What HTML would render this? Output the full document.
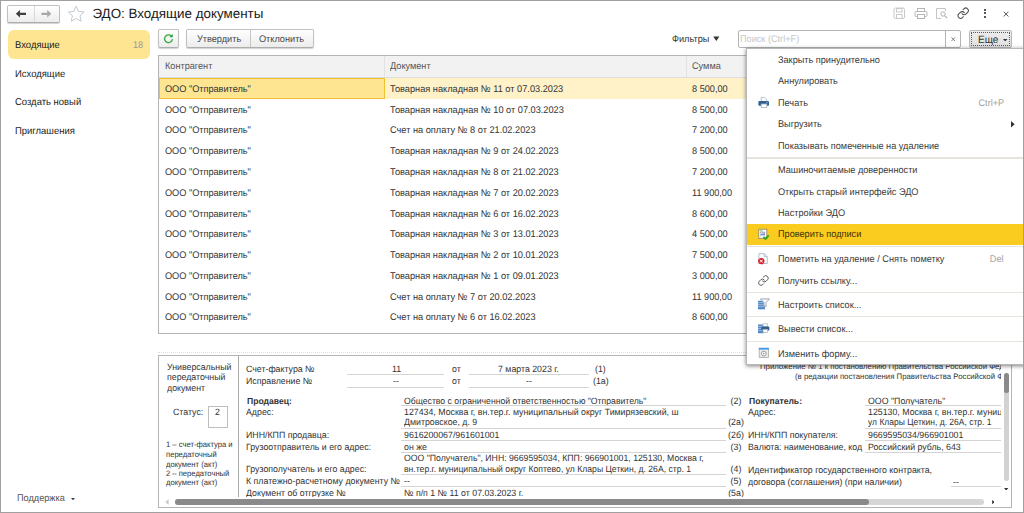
<!DOCTYPE html>
<html lang="ru"><head><meta charset="utf-8"><title>ЭДО: Входящие документы</title>
<style>
html,body{margin:0;padding:0}
body{width:1024px;height:513px;overflow:hidden;background:#fff;font-family:"Liberation Sans",sans-serif;font-size:9.700px;color:#333;position:relative;text-rendering:geometricPrecision}
div,span,i{box-sizing:border-box}
.a{position:absolute}
.t{position:absolute;white-space:nowrap;line-height:12px;height:12px;transform:scaleX(.945);transform-origin:0 0}
.frame{position:absolute;left:0;top:0;width:1024px;height:513px;border:1px solid #a0a0a0;pointer-events:none;z-index:50}
/* header */
.nav{left:7px;top:5px;width:53px;height:18px;border:1px solid #c0c0c0;border-bottom-color:#adadad;border-radius:2px;background:linear-gradient(#fff,#ececec);box-shadow:0 1px 1px rgba(0,0,0,.18)}
.nav i{position:absolute;left:26px;top:0;width:1px;height:16px;background:#d9d9d9}
.title{left:92.400px;top:4px;font-size:13.400px;transform:none;line-height:20px;height:20px;color:#1a1a1a}
/* sidebar */
.sel{left:8px;top:30px;width:142px;height:28.5px;background:#fde591;border-radius:6px}
.side{left:15px;font-size:9.900px;color:#222;transform:scaleX(.958)}
/* toolbar */
.btn{border:1px solid #c0c0c0;border-bottom-color:#adadad;border-radius:2px;background:linear-gradient(#fff,#ececec);box-shadow:0 1px 1px rgba(0,0,0,.18);height:18.500px;top:29px}
.btn .t{top:4px;color:#484848;font-size:9.700px}
/* table */
.tbl{left:158px;top:55px;width:860px;height:278.5px;border:1px solid #b4b4b4;background:#fff}
.th{left:159px;top:56px;width:858px;height:22px;background:#f2f2f2;border-bottom:1px solid #dcdcdc}
.th span{position:absolute;top:4.900px;line-height:12px;color:#555;white-space:nowrap;transform:scaleX(.945);transform-origin:0 0}
.r{position:absolute;left:159px;width:858px;height:20.83px}
.r span{position:absolute;top:6.200px;line-height:12px;white-space:nowrap;color:#333;transform:scaleX(.945);transform-origin:0 0}
.c1{left:5.500px}.c2{left:231px}.c3{left:533px}
.r .c2{transform:scaleX(.951)}
/* menu */
.menu{left:746px;top:48px;width:290px;height:316.5px;background:#fff;border:1px solid #b8b8b8;box-shadow:0 1px 4px rgba(0,0,0,.5);z-index:20}
.mi{position:absolute;left:30.600px;white-space:nowrap;line-height:12px;color:#3a3a3a;font-size:9.700px;transform:scaleX(.945);transform-origin:0 0}
.ms{position:absolute;left:0;width:290px;height:1.400px;background:#e6e4dc}
.sc{position:absolute;white-space:nowrap;line-height:12px;color:#a3a3a3;font-size:9.700px;transform:scaleX(.945);transform-origin:100% 0}
/* doc */
.doc{left:158px;top:355px;width:854px;height:153px;border:1px solid #b4b4b4;background:#fff;overflow:hidden}
.d{position:absolute;white-space:nowrap;line-height:11px;height:11px;font-size:9.100px;color:#333;transform:scaleX(.967);transform-origin:0 0}
.dc{transform-origin:50% 0}
.u{position:absolute;height:1px;background:#d4d4d4}
.s{font-size:7.900px}
.d b{font-weight:bold;font-size:8.900px}
</style></head><body>
<div class="frame"></div>

<!-- header -->
<div class="a nav"><i></i></div>
<svg class="a" style="left:0;top:0" width="60" height="24" viewBox="0 0 60 24"><path d="M15.800 13.800L20 10.100V12.700H26V14.900H20V17.500Z" fill="#404040"/><path d="M51.400 13.800L47.200 10.100V12.700H41.400V14.900H47.200V17.500Z" fill="#a8a8a8"/></svg>
<svg class="a" style="left:67px;top:4.600px" width="18.400" height="17.400" viewBox="0 0 18 17"><path d="M9 1.2l2.3 5 5.4.6-4 3.7 1.1 5.4L9 13.2l-4.8 2.7 1.1-5.4-4-3.7 5.4-.6z" fill="#fff" stroke="#bcc4cb" stroke-width=".9"/></svg>
<div class="t title">ЭДО: Входящие документы</div>

<!-- header right icons -->
<svg class="a" style="left:893px;top:7px" width="13" height="13" viewBox="0 0 13 13"><rect x="1" y="1" width="10.5" height="10.5" rx="1.5" fill="none" stroke="#c9c9c9"/><rect x="3.5" y="1.5" width="5.5" height="3.5" fill="none" stroke="#c9c9c9"/><rect x="3.5" y="7.5" width="5.5" height="4" fill="none" stroke="#c9c9c9"/></svg>
<svg class="a" style="left:914px;top:7px" width="14" height="13" viewBox="0 0 14 13"><rect x="3.5" y="1.5" width="7" height="3" fill="none" stroke="#b5b5b5"/><rect x="1" y="4.5" width="12" height="5" rx="1.2" fill="none" stroke="#b5b5b5"/><rect x="3.5" y="7.5" width="7" height="4" fill="#fff" stroke="#b5b5b5"/></svg>
<svg class="a" style="left:935px;top:7px" width="14" height="13" viewBox="0 0 14 13"><path d="M10.5 4V1.5H1.5v10H6" fill="none" stroke="#c4c4c4"/><circle cx="8" cy="7" r="2.2" fill="none" stroke="#b5b5b5"/><path d="M9.8 8.8L12 11" stroke="#b5b5b5" stroke-width="1.3"/></svg>
<svg class="a" style="left:957.3px;top:7.2px" width="12.400" height="12.400" viewBox="0 0 24 24"><g fill="none" stroke="#505050" stroke-width="2.050" stroke-linecap="round" stroke-linejoin="round"><path d="M10 13a5 5 0 0 0 7.540.540l3-3a5 5 0 0 0-7.070-7.070l-1.720 1.710"/><path d="M14 11a5 5 0 0 0-7.540-.540l-3 3a5 5 0 0 0 7.070 7.070l1.710-1.710"/></g></svg>
<div class="a" style="left:984px;top:9.3px;width:2px;height:2px;background:#555"></div>
<div class="a" style="left:984px;top:12.400px;width:2px;height:2px;background:#555"></div>
<div class="a" style="left:984px;top:15.500px;width:2px;height:2px;background:#555"></div>
<svg class="a" style="left:1003.2px;top:10.500px" width="6.200" height="6.200" viewBox="0 0 7 7"><path d="M.8.8l5.4 5.4M6.2.8L.8 6.2" stroke="#555" stroke-width="1.1"/></svg>

<!-- sidebar -->
<div class="a sel"></div>
<div class="t side" style="top:39.800px">Входящие</div>
<div class="t" style="left:132.500px;top:39.600px;color:#999;font-size:9.700px">18</div>
<div class="t side" style="top:68.600px">Исходящие</div>
<div class="t side" style="top:97px">Создать новый</div>
<div class="t side" style="top:125.500px">Приглашения</div>
<div class="t" style="left:17px;top:493px;color:#555;font-size:9.700px">Поддержка</div>
<svg class="a" style="left:70.600px;top:498.100px" width="4" height="2.400" viewBox="0 0 6 4" preserveAspectRatio="none"><path d="M0 0h6L3 4z" fill="#444"/></svg>

<!-- toolbar -->
<div class="a btn" style="left:158px;width:21px">
<svg class="a" style="left:4px;top:3.200px" width="11" height="11" viewBox="0 0 11 11"><path d="M8.400 3.100A3.900 3.900 0 1 0 9.400 6.100" fill="none" stroke="#35a83d" stroke-width="1.350"/><path d="M9.700 1v3.300H6.400z" fill="#1f9a2a"/></svg>
</div>
<div class="a btn" style="left:186px;width:128px"><i class="a" style="left:63px;top:0;width:1px;height:16.500px;background:#c6c6c6"></i>
<span class="t" style="left:10px">Утвердить</span><span class="t" style="left:72px">Отклонить</span></div>
<div class="t" style="left:671.500px;top:34px;font-size:9.700px;color:#333">Фильтры</div>
<svg class="a" style="left:713px;top:36.300px" width="6.600" height="5.600" viewBox="0 0 9 7"><path d="M.3.3h8.4L4.5 6.6z" fill="#333"/></svg>
<div class="a" style="left:738px;top:30px;width:223px;height:17.500px;border:1px solid #b4b4b4;border-radius:2px;background:#fff">
<i class="a" style="left:206px;top:0;width:1px;height:15.500px;background:#b4b4b4"></i>
<span class="t" style="left:1px;top:2.500px;color:#c6c6c6;font-size:9.700px">Поиск (Ctrl+F)</span>
<svg class="a" style="left:212px;top:5.700px" width="4.500" height="4.500" viewBox="0 0 5 5"><path d="M.5.5l4 4M4.500 .5l-4 4" stroke="#666" stroke-width=".9"/></svg>
</div>
<div class="a" style="left:968.5px;top:29.5px;width:43px;height:18px;border:1px solid #b9b9b9;border-radius:2px;background:linear-gradient(#ededed,#e0e0e0)">
<i class="a" style="left:1px;top:1px;width:39px;height:14px;border:1px dotted #5a5a5a;border-radius:1px"></i>
<span class="t" style="left:8.500px;top:3.300px;color:#333;font-size:10.600px">Еще</span>
<svg class="a" style="left:33.500px;top:8px" width="4.500" height="2.700" viewBox="0 0 5 3"><path d="M0 0h5L2.500 2.800z" fill="#333"/></svg>
</div>

<!-- table -->
<div class="a tbl"></div>
<div class="a th"><span style="left:5.500px">Контрагент</span><span style="left:231px">Документ</span><span style="left:533px">Сумма</span>
<i class="a" style="left:225px;top:0;width:1px;height:21px;background:#e2e2e2"></i><i class="a" style="left:526.5px;top:0;width:1px;height:21px;background:#e2e2e2"></i></div>
<div class="a" style="left:159px;top:78px;width:858px;height:20.800px;background:#fff2c9"></div>
<div class="a" style="left:159px;top:78px;width:225.500px;height:21px;background:#fde591;border:1px solid #f0bf32"></div>
<div class="r" style="top:77.60px"><span class="c1">ООО "Отправитель"</span><span class="c2">Товарная накладная № 11 от 07.03.2023</span><span class="c3">8 500,00</span></div>
<div class="r" style="top:98.39px"><span class="c1">ООО "Отправитель"</span><span class="c2">Товарная накладная № 10 от 07.03.2023</span><span class="c3">8 500,00</span></div>
<div class="r" style="top:119.18px"><span class="c1">ООО "Отправитель"</span><span class="c2">Счет на оплату № 8 от 21.02.2023</span><span class="c3">7 200,00</span></div>
<div class="r" style="top:139.97px"><span class="c1">ООО "Отправитель"</span><span class="c2">Товарная накладная № 9 от 24.02.2023</span><span class="c3">8 500,00</span></div>
<div class="r" style="top:160.76px"><span class="c1">ООО "Отправитель"</span><span class="c2">Товарная накладная № 8 от 21.02.2023</span><span class="c3">7 200,00</span></div>
<div class="r" style="top:181.55px"><span class="c1">ООО "Отправитель"</span><span class="c2">Товарная накладная № 7 от 20.02.2023</span><span class="c3">11 900,00</span></div>
<div class="r" style="top:202.34px"><span class="c1">ООО "Отправитель"</span><span class="c2">Товарная накладная № 6 от 16.02.2023</span><span class="c3">8 600,00</span></div>
<div class="r" style="top:223.13px"><span class="c1">ООО "Отправитель"</span><span class="c2">Товарная накладная № 3 от 13.01.2023</span><span class="c3">4 500,00</span></div>
<div class="r" style="top:243.92px"><span class="c1">ООО "Отправитель"</span><span class="c2">Товарная накладная № 2 от 10.01.2023</span><span class="c3">7 500,00</span></div>
<div class="r" style="top:264.71px"><span class="c1">ООО "Отправитель"</span><span class="c2">Товарная накладная № 1 от 09.01.2023</span><span class="c3">3 000,00</span></div>
<div class="r" style="top:285.50px"><span class="c1">ООО "Отправитель"</span><span class="c2">Счет на оплату № 7 от 20.02.2023</span><span class="c3">11 900,00</span></div>
<div class="r" style="top:306.29px"><span class="c1">ООО "Отправитель"</span><span class="c2">Счет на оплату № 6 от 16.02.2023</span><span class="c3">8 600,00</span></div>

<!-- splitter dots -->
<div class="a" style="left:158px;top:352px;width:854px;height:0;border-top:1px dotted #dedede"></div>

<!-- doc -->
<div class="a doc">
<div class="a" style="left:0;top:0;width:842px;height:141px;overflow:hidden">
<i class="a" style="left:78.5px;top:0;width:1px;height:141px;background:#a9a9a9"></i>
<span class="d" style="left:7.7px;top:5.8px;">Универсальный</span>
<span class="d" style="left:7.7px;top:15.8px;">передаточный</span>
<span class="d" style="left:7.7px;top:26.8px;">документ</span>
<span class="d" style="left:13.5px;top:50.8px;">Статус:</span>
<i class="a" style="left:49.0px;top:50.0px;width:19.5px;height:22px;border:1px solid #bdbdbd"></i>
<span class="d" style="left:55.8px;top:50.8px;">2</span>
<span class="d s" style="left:7.0px;top:83.3px;">1 – счет-фактура и</span>
<span class="d s" style="left:7.0px;top:93.3px;">передаточный</span>
<span class="d s" style="left:7.0px;top:102.8px;">документ (акт)</span>
<span class="d s" style="left:7.0px;top:112.3px;">2 – передаточный</span>
<span class="d s" style="left:7.0px;top:121.3px;">документ (акт)</span>
<span class="d" style="left:86.6px;top:7.8px;">Счет-фактура №</span>
<span class="d" style="left:86.6px;top:19.8px;">Исправление №</span>
<span class="d" style="left:233.0px;top:7.8px;">11</span>
<span class="d" style="left:234.0px;top:19.8px;">--</span>
<i class="u" style="left:188.0px;top:18.2px;width:97.3px"></i>
<i class="u" style="left:188.0px;top:30.8px;width:97.3px"></i>
<span class="d" style="left:293.0px;top:7.8px;">от</span>
<span class="d" style="left:293.0px;top:19.8px;">от</span>
<span class="d" style="left:339.0px;top:7.8px;">7 марта 2023 г.</span>
<span class="d" style="left:367.0px;top:19.8px;">--</span>
<i class="u" style="left:310.0px;top:18.2px;width:119.5px"></i>
<i class="u" style="left:310.0px;top:30.8px;width:119.5px"></i>
<span class="d" style="left:436.0px;top:7.8px;">(1)</span>
<span class="d" style="left:434.0px;top:19.8px;">(1а)</span>
<span class="d" style="left:87.7px;top:39.8px;"><b>Продавец:</b></span>
<span class="d" style="left:244.5px;top:39.8px;transform:scaleX(0.9529);">Общество с ограниченной ответственностью "Отправитель"</span>
<span class="d dc" style="left:556.6px;width:40px;text-align:center;top:39.8px">(2)</span>
<span class="d" style="left:86.6px;top:50.8px;">Адрес:</span>
<span class="d" style="left:244.5px;top:50.8px;transform:scaleX(0.9673);">127434, Москва г, вн.тер.г. муниципальный округ Тимирязевский, ш</span>
<span class="d" style="left:244.5px;top:61.2px;">Дмитровское, д. 9</span>
<span class="d dc" style="left:556.6px;width:40px;text-align:center;top:61.2px">(2а)</span>
<span class="d" style="left:86.6px;top:73.8px;">ИНН/КПП продавца:</span>
<span class="d" style="left:244.5px;top:73.8px;">9616200067/961601001</span>
<span class="d dc" style="left:556.6px;width:40px;text-align:center;top:73.8px">(2б)</span>
<span class="d" style="left:86.6px;top:85.8px;">Грузоотправитель и его адрес:</span>
<span class="d" style="left:244.5px;top:85.8px;">он же</span>
<span class="d dc" style="left:556.6px;width:40px;text-align:center;top:85.8px">(3)</span>
<span class="d" style="left:244.5px;top:96.8px;transform:scaleX(0.9575);">ООО "Получатель", ИНН: 9669595034, КПП: 966901001, 125130, Москва г,</span>
<span class="d" style="left:86.6px;top:107.8px;">Грузополучатель и его адрес:</span>
<span class="d" style="left:244.5px;top:107.8px;transform:scaleX(0.9486);">вн.тер.г. муниципальный округ Коптево, ул Клары Цеткин, д. 26А, стр. 1</span>
<span class="d dc" style="left:556.6px;width:40px;text-align:center;top:107.8px">(4)</span>
<span class="d" style="left:86.6px;top:119.8px;">К платежно-расчетному документу №</span>
<span class="d" style="left:244.5px;top:119.8px;">--</span>
<span class="d dc" style="left:556.6px;width:40px;text-align:center;top:119.8px">(5)</span>
<span class="d" style="left:86.6px;top:131.8px;">Документ об отгрузке №</span>
<span class="d" style="left:244.5px;top:131.8px;">№ п/п 1 № 11 от 07.03.2023 г.</span>
<span class="d dc" style="left:556.6px;width:40px;text-align:center;top:131.8px">(5а)</span>
<i class="u" style="left:242.3px;top:48.6px;width:324.7px"></i>
<i class="u" style="left:242.3px;top:71.8px;width:324.7px"></i>
<i class="u" style="left:242.3px;top:83.6px;width:324.7px"></i>
<i class="u" style="left:242.3px;top:95.9px;width:324.7px"></i>
<i class="u" style="left:242.3px;top:117.5px;width:324.7px"></i>
<i class="u" style="left:242.3px;top:129.8px;width:324.7px"></i>
<span class="d" style="left:589.6px;top:39.8px;"><b>Покупатель:</b></span>
<span class="d" style="left:589.0px;top:50.8px;">Адрес:</span>
<span class="d" style="left:589.0px;top:73.8px;">ИНН/КПП покупателя:</span>
<span class="d" style="left:589.0px;top:85.8px;">Валюта: наименование, код</span>
<span class="d" style="left:589.0px;top:108.8px;">Идентификатор государственного контракта,</span>
<span class="d" style="left:589.0px;top:120.8px;">договора (соглашения) (при наличии)</span>
<span class="d" style="left:708.6px;top:39.8px;">ООО "Получатель"</span>
<span class="d" style="left:708.6px;top:50.8px;">125130, Москва г, вн.тер.г. муниципальный округ Коптево,</span>
<span class="d" style="left:708.6px;top:61.2px;transform:scaleX(0.9341);">ул Клары Цеткин, д. 26А, стр. 1</span>
<span class="d" style="left:708.6px;top:73.8px;">9669595034/966901001</span>
<span class="d" style="left:708.6px;top:85.8px;">Российский рубль, 643</span>
<i class="u" style="left:706.3px;top:48.6px;width:135.7px"></i>
<i class="u" style="left:706.3px;top:71.8px;width:135.7px"></i>
<i class="u" style="left:706.3px;top:83.6px;width:135.7px"></i>
<i class="u" style="left:706.3px;top:95.9px;width:135.7px"></i>
<span class="d" style="left:794.0px;top:120.8px;">--</span>
<i class="u" style="left:792.0px;top:130.1px;width:50.0px"></i>
<span class="d s" style="left:601.3px;top:5.3px;transform:scaleX(.985);">Приложение № 1 к постановлению Правительства Российской Федерации</span>
<span class="d s" style="left:636.0px;top:14.8px;transform:scaleX(.985);">(в редакции постановления Правительства Российской Федерации</span>
</div>
<!-- h scrollbar -->
<svg class="a" style="left:6px;top:143.2px" width="4" height="6" viewBox="0 0 4 6"><path d="M3.600 0L.3 3l3.300 3z" fill="#c9c9c9"/></svg>
<i class="a" style="left:16px;top:143px;width:808.500px;height:6px;border-radius:3px;background:#d6d6d6"></i>
<i class="a" style="left:16px;top:143px;width:694px;height:6px;border-radius:3px;background:#8a8a8a"></i>
<svg class="a" style="left:832.500px;top:144.300px" width="2.800" height="4.200" viewBox="0 0 3 5"><path d="M0 0l3 2.500L0 5z" fill="#333"/></svg>
<!-- v scrollbar -->
<i class="a" style="left:844.5px;top:17px;width:5.5px;height:108px;border-radius:3px;background:#d2d2d2"></i>
<i class="a" style="left:844.5px;top:17px;width:5.5px;height:20px;border-radius:3px;background:#8a8a8a"></i>
<svg class="a" style="left:845.3px;top:131.800px" width="4.400" height="2.600" viewBox="0 0 5 3"><path d="M0 0h5L2.500 3z" fill="#333"/></svg>
</div>

<!-- menu -->
<div class="a menu">
<div class="a" style="left:0;top:175.0px;width:290px;height:20.800px;background:#facc1f"></div>
<span class="mi" style="top:5.8px">Закрыть принудительно</span>
<span class="mi" style="top:26.8px">Аннулировать</span>
<span class="mi" style="top:48.8px">Печать</span>
<span class="mi" style="top:69.8px">Выгрузить</span>
<span class="mi" style="top:91.8px">Показывать помеченные на удаление</span>
<span class="mi" style="top:115.8px">Машиночитаемые доверенности</span>
<span class="mi" style="top:137.8px">Открыть старый интерфейс ЭДО</span>
<span class="mi" style="top:158.8px">Настройки ЭДО</span>
<span class="mi" style="top:179.8px;color:#3d3208">Проверить подписи</span>
<span class="mi" style="top:204.8px">Пометить на удаление / Снять пометку</span>
<span class="mi" style="top:226.8px">Получить ссылку...</span>
<span class="mi" style="top:250.8px">Настроить список...</span>
<span class="mi" style="top:274.8px">Вывести список...</span>
<span class="mi" style="top:299.8px">Изменить форму...</span>
<div class="ms" style="top:108.3px"></div>
<div class="ms" style="top:196.9px"></div>
<div class="ms" style="top:242.8px"></div>
<div class="ms" style="top:267.1px"></div>
<div class="ms" style="top:291.7px"></div>
<span class="sc" style="right:30.7px;top:48.8px">Ctrl+P</span>
<span class="sc" style="right:31.7px;top:204.8px">Del</span>
<svg class="a" style="left:264.300px;top:72.300px" width="3.700" height="6.600" viewBox="0 0 4 7"><path d="M0 0l4 3.500L0 7z" fill="#333"/></svg>
<svg class="a" style="left:8px;top:0" width="20" height="316" viewBox="755 49 20 316">
<!-- printer -->
<path d="M761.200 97.400h3.200l2.400 2.400v1.600h-5.600z" fill="#fff" stroke="#a5b4c4" stroke-width=".8"/>
<rect x="758.400" y="101" width="10.600" height="4.800" rx="1" fill="#2e5f8d"/>
<rect x="766" y="101.900" width="2.200" height=".9" fill="#7fa8d0"/>
<rect x="761.200" y="104" width="5.600" height="3.600" fill="#fff" stroke="#a5b4c4" stroke-width=".8"/>
<!-- doc check -->
<rect x="758.800" y="229.200" width="8" height="9.200" fill="#fff" stroke="#8c8262" stroke-width=".8"/>
<path d="M760.200 230.900h2.500" stroke="#4caf50" stroke-width=".9"/>
<path d="M760.200 232.300h1.300" stroke="#e05050" stroke-width=".9"/><path d="M762 232.300h3.200" stroke="#6c9bd8" stroke-width=".9"/>
<rect x="760.200" y="233.600" width="4.800" height="1.800" fill="#6c9bd8"/><rect x="763.300" y="233.400" width="1.400" height="1" fill="#e05050"/>
<path d="M760.200 236.800h1.500" stroke="#a9bbd0" stroke-width=".8"/>
<path d="M763.400 236.800l2.100 2.200 3.200-3.600" fill="none" stroke="#35a228" stroke-width="1.900"/>
<!-- doc delete -->
<path d="M758.900 253.700h5.400l3 3v6.800h-8.400z" fill="#fff" stroke="#9fb0c2" stroke-width=".8"/>
<path d="M764.300 253.700v3h3" fill="none" stroke="#9fb0c2" stroke-width=".8"/>
<circle cx="761.300" cy="261.100" r="3.200" fill="#d8232a"/>
<path d="M759.900 259.700l2.800 2.800m0-2.800l-2.800 2.800" stroke="#fff" stroke-width="1"/>
<!-- link -->
<svg x="757.600" y="274.700" width="11.600" height="11.600" viewBox="0 0 24 24"><g fill="none" stroke="#4d4d4d" stroke-width="1.900" stroke-linecap="round" stroke-linejoin="round"><path d="M10 13a5 5 0 0 0 7.540.540l3-3a5 5 0 0 0-7.070-7.070l-1.720 1.710"/><path d="M14 11a5 5 0 0 0-7.540-.540l-3 3a5 5 0 0 0 7.070 7.070l1.710-1.710"/></g></svg>
<!-- filter list -->
<rect x="758" y="300.800" width="7" height="8.500" fill="#4f86c6"/>
<path d="M758 302.700h7M758 304.700h7M758 306.700h7" stroke="#d5e4f5" stroke-width=".6"/>
<path d="M760.300 298.900h9.300l-3.500 3.700v4.100l-2.200-1v-3.100z" fill="#f4f6f8" stroke="#8b98a6" stroke-width=".8"/>
<!-- print list -->
<rect x="758" y="324.500" width="6" height="8.700" fill="#4f86c6"/>
<path d="M758 326.400h6M758 328.400h6M758 330.400h6" stroke="#d5e4f5" stroke-width=".6"/>
<rect x="763" y="323.800" width="4.600" height="3" fill="#fff" stroke="#9fb0c2" stroke-width=".7"/>
<rect x="761.300" y="326.600" width="8" height="4" rx=".8" fill="#2e5f8d"/>
<rect x="763" y="329.300" width="4.600" height="3.100" fill="#fff" stroke="#9fb0c2" stroke-width=".7"/>
<!-- form -->
<rect x="759.200" y="348.300" width="9.200" height="9.200" fill="#ececec" stroke="#a8a8a8" stroke-width=".8"/>
<rect x="758.800" y="347.800" width="10" height="1.800" fill="#3d9be9"/>
<circle cx="763.800" cy="353.600" r="2.400" fill="#fff" stroke="#8e8e8e" stroke-width=".9"/>
<circle cx="763.800" cy="353.600" r=".8" fill="#8e8e8e"/>
</svg>

</div>

</body></html>
